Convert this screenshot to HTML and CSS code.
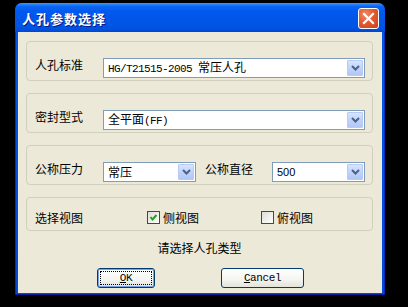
FILE: index.html
```html
<!DOCTYPE html>
<html lang="zh-CN">
<head>
  <meta charset="UTF-8">
  <title>人孔参数选择</title>
  <link rel="stylesheet" href="styles.css">
</head>
<body>

<div class="window">
  <div class="titlebar">
    <span class="title">人孔参数选择</span>
    <button class="close-button" aria-label="关闭">
      <svg width="21" height="21" viewBox="0 0 21 21">
        <path d="M6 6 L15 15 M15 6 L6 15" stroke="#fff" stroke-width="2.2" stroke-linecap="square" fill="none"/>
      </svg>
    </button>
  </div>

  <div class="client">
    <div class="group">
      <div class="row">
        <span class="label">人孔标准</span>
        <div class="select wide">
          <span class="value"><span class="asc">HG/T21515-2005 </span>常压人孔</span>
          <span class="drop"><svg width="9" height="6" viewBox="0 0 9 6"><path d="M1 1 L4.5 4.5 L8 1" stroke="#4d6185" stroke-width="2" fill="none"/></svg></span>
        </div>
      </div>
    </div>

    <div class="group">
      <div class="row">
        <span class="label">密封型式</span>
        <div class="select wide">
          <span class="value">全平面<span class="asc">(FF)</span></span>
          <span class="drop"><svg width="9" height="6" viewBox="0 0 9 6"><path d="M1 1 L4.5 4.5 L8 1" stroke="#4d6185" stroke-width="2" fill="none"/></svg></span>
        </div>
      </div>
    </div>

    <div class="group">
      <div class="row">
        <span class="label">公称压力</span>
        <div class="select short">
          <span class="value">常压</span>
          <span class="drop"><svg width="9" height="6" viewBox="0 0 9 6"><path d="M1 1 L4.5 4.5 L8 1" stroke="#4d6185" stroke-width="2" fill="none"/></svg></span>
        </div>
        <span class="label second">公称直径</span>
        <div class="select short">
          <span class="value num">500</span>
          <span class="drop"><svg width="9" height="6" viewBox="0 0 9 6"><path d="M1 1 L4.5 4.5 L8 1" stroke="#4d6185" stroke-width="2" fill="none"/></svg></span>
        </div>
      </div>
    </div>

    <div class="group views">
      <div class="row">
        <span class="label">选择视图</span>
        <label class="check first">
          <span class="box checked"><svg width="11" height="11" viewBox="0 0 11 11"><path d="M2.5 5 L4.5 7.5 L8.5 3" stroke="#21a121" stroke-width="2" fill="none"/></svg></span>
          侧视图
        </label>
        <label class="check">
          <span class="box"></span>
          俯视图
        </label>
      </div>
    </div>

    <p class="hint">请选择人孔类型</p>

    <div class="buttons">
      <button class="btn ok"><span class="focus"><u>O</u>K</span></button>
      <button class="btn cancel"><u>C</u>ancel</button>
    </div>
  </div>
</div>

</body>
</html>
```

FILE: styles.css
```css
body {
  margin: 0;
  background: #000;
  font-family: "Noto Sans CJK SC", "Liberation Sans", sans-serif;
  font-size: 12px;
  color: #000;
}
.window {
  margin: 3px 0 0 15px;
  width: 370px;
  height: 292px;
  box-sizing: border-box;
  padding: 0 3px 2px 3px;
  border-radius: 7px 7px 0 0;
  background: linear-gradient(180deg, #0058ee 0%, #0054e3 40%, #0548d8 100%);
  box-shadow: inset 0 -1px 0 #001ea0, inset -1px 0 0 #0030b8, inset 1px 0 0 #0030b8;
  display: flex;
  flex-direction: column;
}
.titlebar {
  height: 29px;
  flex: none;
  margin: 0 -3px;
  padding: 0 6px 0 7px;
  border-radius: 7px 7px 0 0;
  display: flex;
  align-items: center;
  justify-content: space-between;
  background: linear-gradient(180deg, #3d95ff 0%, #0a66f4 12%, #0058ee 30%, #0055e5 70%, #0052e0 90%, #0045d0 100%);
}
.title {
  color: #fff;
  font-weight: bold;
  font-size: 13px;
  letter-spacing: 1px;
  text-shadow: 1px 1px 0 #0a1883;
  margin-top: 1px;
}
.close-button {
  width: 21px;
  height: 21px;
  padding: 0;
  margin-top: 1px;
  border: 1px solid #fff;
  border-radius: 3px;
  background: radial-gradient(circle at 35% 30%, #f08a68 0%, #e35a32 45%, #c8401a 100%);
  display: flex;
  align-items: center;
  justify-content: center;
}
.close-button svg {
  margin: -1px;
}
.client {
  flex: 1;
  background: #ece9d8;
  padding: 9px 9px 0 8px;
  display: flex;
  flex-direction: column;
}
.group {
  height: 40px;
  box-sizing: border-box;
  border: 1px solid #d0d0bf;
  border-radius: 4px;
  padding: 16px 7px 0 8px;
  margin-bottom: 12px;
}
.group.views {
  height: 34px;
  padding-top: 13px;
  margin-bottom: 0;
}
.row {
  display: flex;
  align-items: flex-start;
}
.label {
  width: 68px;
  flex: none;
  line-height: 14px;
}
.label.second {
  width: 67px;
  margin-left: 9px;
}
.select {
  height: 20px;
  box-sizing: border-box;
  border: 1px solid #7f9db9;
  background: #fff;
  display: flex;
  align-items: center;
  justify-content: space-between;
  padding: 1px;
}
.select.wide {
  width: 263px;
}
.select.short {
  width: 94px;
}
.value {
  padding-left: 3px;
  line-height: 16px;
  white-space: pre;
}
.asc {
  font-family: "Liberation Mono", monospace;
  font-size: 11px;
  letter-spacing: -0.6px;
}
.num {
  font-family: "Liberation Sans", sans-serif;
  font-size: 11px;
}
.drop {
  width: 16px;
  height: 16px;
  box-sizing: border-box;
  border: 1px solid #b6cbf6;
  border-radius: 1px;
  background: linear-gradient(180deg, #d7e4fd 0%, #c1d3fb 50%, #b2c7f5 100%);
  display: flex;
  align-items: center;
  justify-content: center;
}
.check {
  display: flex;
  align-items: center;
  gap: 3px;
  line-height: 13px;
}
.check.first {
  margin-left: 44px;
  width: 114px;
}
.box {
  width: 13px;
  height: 13px;
  box-sizing: border-box;
  border: 1px solid #1c5180;
  background: linear-gradient(135deg, #dcdcd7 0%, #f5f5f2 70%, #fff 100%);
  display: flex;
  align-items: center;
  justify-content: center;
}
.hint {
  margin: 10px 0 0;
  text-align: center;
  line-height: 14px;
}
.buttons {
  display: flex;
  gap: 66px;
  padding-left: 71px;
  margin-top: 13px;
}
.btn {
  height: 20px;
  box-sizing: border-box;
  border: 1px solid #003c74;
  border-radius: 3px;
  background: linear-gradient(180deg, #ffffff 0%, #f4f4f0 60%, #e3e3db 100%);
  font-family: "Liberation Mono", monospace;
  font-size: 11px;
  letter-spacing: -0.4px;
  color: #000;
  padding: 0;
  display: flex;
  align-items: center;
  justify-content: center;
}
.btn.ok {
  width: 58px;
  box-shadow: inset 0 0 0 1px #7ba2e7;
  padding: 2px;
}
.btn.ok .focus {
  flex: 1;
  align-self: stretch;
  border: 1px dotted #000;
  display: flex;
  align-items: center;
  justify-content: center;
}
.btn.cancel {
  width: 83px;
}
```
